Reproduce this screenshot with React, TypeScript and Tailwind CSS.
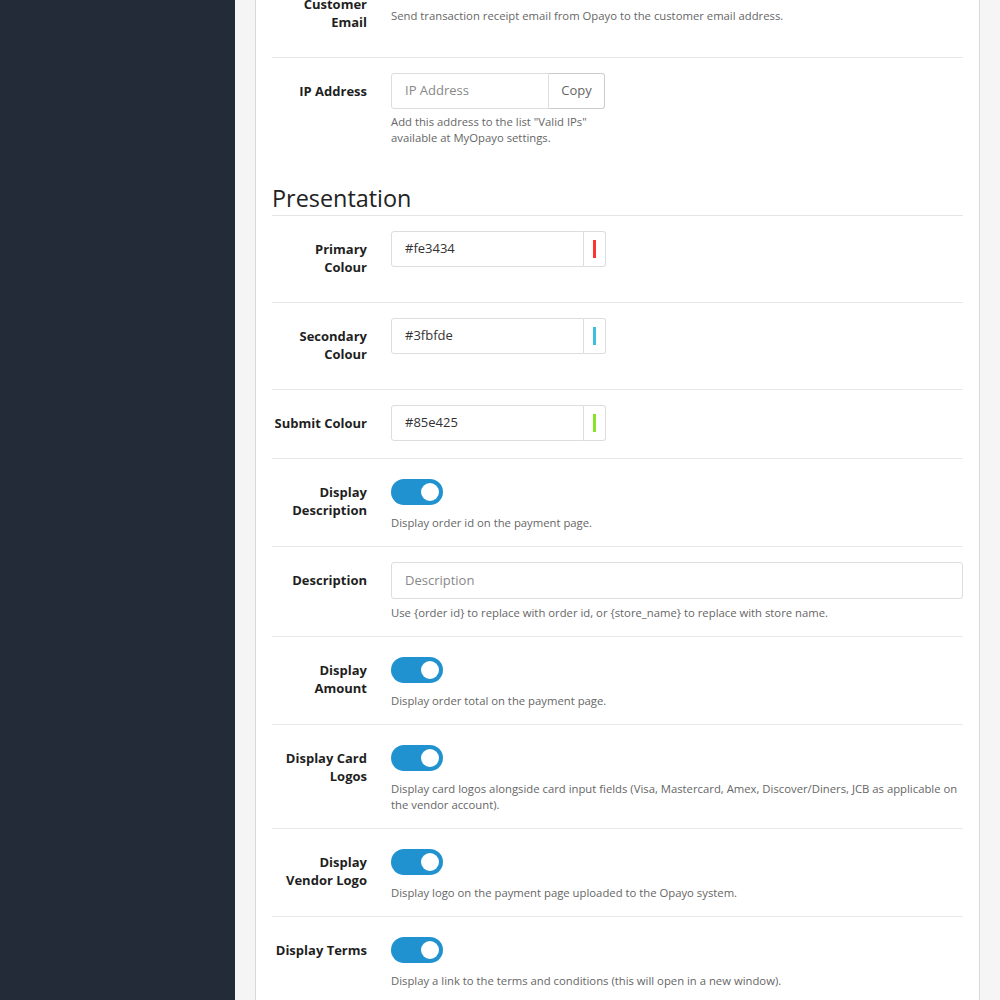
import React from "react";

const Toggle = () => (
    <div className="mt-[5px] flex h-[26px] w-[52px] items-center justify-end rounded-full bg-[#2192d0] pr-[4px]">
        <span className="h-[18px] w-[18px] rounded-full bg-white" />
    </div>
);

const Help = ({ children, className = "" }: { children: React.ReactNode; className?: string }) => (
    <p className={"text-[11.3px] leading-[16px] text-[#666] " + className}>{children}</p>
);

const Row = ({ label, children, first = false }: { label: string; children: React.ReactNode; first?: boolean }) => (
    <div className={"flex gap-6 py-[15px] " + (first ? "" : "border-t border-[#e8e8e8]")}>
        <label className="w-[95px] shrink-0 pt-[9px] pb-[11px] text-right text-[13px] font-bold leading-[18px] text-[#1f1f1f]">
            {label}
        </label>
        <div className="min-w-0 flex-1">{children}</div>
    </div>
);

const ColourInput = ({ value, colour }: { value: string; colour: string }) => (
    <div className="flex h-9 w-[215px]">
        <div className="flex flex-1 items-center rounded-l-[3px] border border-[#ddd] px-[13px] text-[13px] text-[#333]">
            {value}
        </div>
        <div className="flex w-[22px] items-center justify-center rounded-r-[3px] border border-l-0 border-[#ddd] bg-white">
            <span className={"h-[18px] w-[3px] " + colour} />
        </div>
    </div>
);

const ToggleRow = ({ label, help }: { label: string; help: React.ReactNode }) => (
    <Row label={label}>
        <Toggle />
        <Help className="mt-[10px]">{help}</Help>
    </Row>
);

export default function App() {
    return (
        <div className="flex h-screen overflow-hidden font-['Open_Sans',sans-serif]">
            {/* Sidebar */}
            <aside className="w-[235px] shrink-0 bg-[#242b38]" />

            {/* Main */}
            <main className="flex-1 bg-[#f5f5f5] px-5">
                <div className="-mt-[47px] border-x border-[#d9d9d9] bg-white px-4">
                    <Row label="Send Customer Email" first>
                        <Toggle />
                        <Help className="mt-[9px]">
                            Send transaction receipt email from Opayo to the customer email address.
                        </Help>
                    </Row>

                    <Row label="IP Address">
                        <div className="flex h-9 w-[214px]">
                            <div className="flex flex-1 items-center rounded-l-[3px] border border-[#ddd] px-[13px] text-[13px] text-[#888]">
                                IP Address
                            </div>
                            <button className="w-[56px] rounded-r-[3px] border border-l-0 border-[#ccc] bg-white text-[13px] text-[#666]">
                                Copy
                            </button>
                        </div>
                        <Help className="mt-[5px]">
                            Add this address to the list "Valid IPs"
                            <br />
                            available at MyOpayo settings.
                        </Help>
                    </Row>

                    {/* Presentation */}
                    <h3 className="mt-[22px] border-b border-[#e5e5e5] pb-[2px] text-[23.4px] leading-[30px] font-normal text-[#222]">
                        Presentation
                    </h3>

                    <Row label="Primary Colour" first>
                        <ColourInput value="#fe3434" colour="bg-[#fe3434]" />
                    </Row>
                    <Row label="Secondary Colour">
                        <ColourInput value="#3fbfde" colour="bg-[#3fbfde]" />
                    </Row>
                    <Row label="Submit Colour">
                        <ColourInput value="#85e425" colour="bg-[#85e425]" />
                    </Row>

                    <ToggleRow label="Display Description" help="Display order id on the payment page." />

                    <Row label="Description">
                        <div className="flex h-[37px] items-center rounded-[3px] border border-[#ddd] px-[13px] text-[13px] text-[#888]">
                            Description
                        </div>
                        <Help className="mt-[6px]">
                            Use {"{order id}"} to replace with order id, or {"{store_name}"} to replace with store name.
                        </Help>
                    </Row>

                    <ToggleRow label="Display Amount" help="Display order total on the payment page." />
                    <ToggleRow
                        label="Display Card Logos"
                        help="Display card logos alongside card input fields (Visa, Mastercard, Amex, Discover/Diners, JCB as applicable on the vendor account)."
                    />
                    <ToggleRow label="Display Vendor Logo" help="Display logo on the payment page uploaded to the Opayo system." />
                    <ToggleRow
                        label="Display Terms"
                        help="Display a link to the terms and conditions (this will open in a new window)."
                    />
                </div>
            </main>
        </div>
    );
}
